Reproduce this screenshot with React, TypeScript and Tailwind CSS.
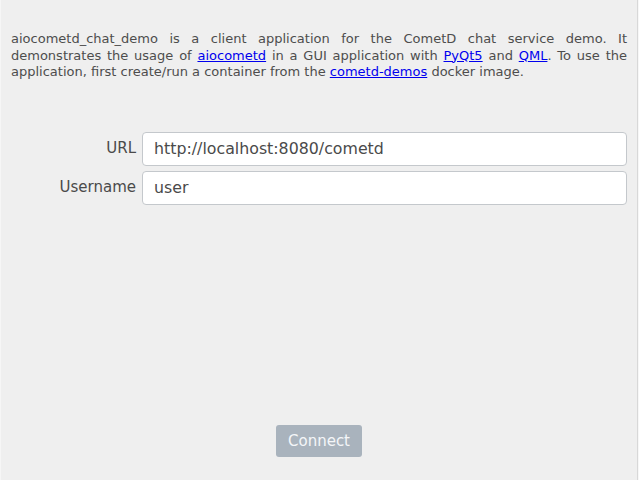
import React from 'react';

const font = { fontFamily: '"DejaVu Sans", sans-serif' };

const Link: React.FC<{ children: React.ReactNode }> = ({ children }) => (
    <a href="#" className="text-[#0000ee] underline">{children}</a>
);

const Field: React.FC<{ label: string; value: string }> = ({ label, value }) => (
    <>
        <label className="text-right text-[15px] text-[#4a4a4a] self-center">{label}</label>
        <input
            readOnly
            value={value}
            className="h-[34px] rounded-[4px] border border-[#c4c8cc] bg-white px-[11px] text-[15.8px] text-[#4a4a4a] outline-none"
            style={font}
        />
    </>
);

export default function App() {
    return (
        <div className="flex h-[480px] w-[639px] bg-[#efefef]" style={font}>
            {/* Main window */}
            <div className="flex flex-1 flex-col border-l border-[#f6f6f6]">
                <p className="px-[10px] pt-[31px] text-justify text-[13px] leading-[16.5px] text-[#4d4d4d]">
                    aiocometd_chat_demo is a client application for the CometD chat service demo. It
                    demonstrates the usage of <Link>aiocometd</Link> in a GUI application with{' '}
                    <Link>PyQt5</Link> and <Link>QML</Link>. To use the application, first create/run a
                    container from the <Link>cometd-demos</Link> docker image.
                </p>

                {/* Form */}
                <div className="mt-[51px] mr-[10px] grid grid-cols-[135px_1fr] gap-x-[6px] gap-y-[5px]">
                    <Field label="URL" value="http://localhost:8080/cometd" />
                    <Field label="Username" value="user" />
                </div>

                <div className="flex-1" />

                <div className="flex justify-center pb-[23px]">
                    <button
                        className="h-[32px] w-[86px] rounded-[3px] bg-[#a9b3bd] text-[15px] text-[#f4f6f8]"
                        style={font}
                    >
                        Connect
                    </button>
                </div>
            </div>
            {/* Right frame edge */}
            <div className="w-[1px] bg-[#d8d8d8]" />
            <div className="w-[1px] bg-[#f7f7f7]" />
        </div>
    );
}
